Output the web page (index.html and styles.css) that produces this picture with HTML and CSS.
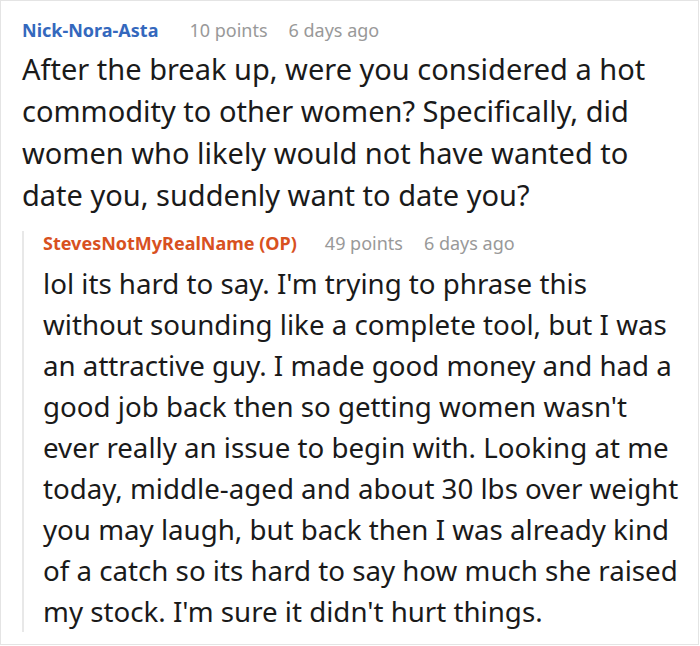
FILE: index.html
```html
<!DOCTYPE html>
<html lang="en">
<head>
<meta charset="utf-8">
<title>Comment thread</title>
<link rel="stylesheet" href="styles.css">
</head>
<body>
<div class="frame">
  <div class="comment">
    <div class="meta">
      <span class="user user-blue">Nick-Nora-Asta</span>
      <span class="info">10 points</span>
      <span class="info">6 days ago</span>
    </div>
    <p class="body">After the break up, were you considered a hot commodity to other women? Specifically, did women who likely would not have wanted to date you, suddenly want to date you?</p>
    <div class="reply">
      <div class="meta meta-reply">
        <span class="user user-op">StevesNotMyRealName (OP)</span>
        <span class="info">49 points</span>
        <span class="info">6 days ago</span>
      </div>
      <p class="body body-reply">lol its hard to say. I'm trying to phrase this<br>
without sounding like a complete tool, but I was<br>
an attractive guy. I made good money and had a<br>
good job back then so getting women wasn't<br>
ever really an issue to begin with. Looking at me<br>
today, middle-aged and about 30 lbs over weight<br>
you may laugh, but back then I was already kind<br>
of a catch so its hard to say how much she raised<br>
my stock. I'm sure it didn't hurt things.</p>
    </div>
  </div>
</div>
</body>
</html>
```
FILE: styles.css
```css
html, body {
  margin: 0;
  padding: 0;
  background: #ffffff;
}
.frame {
  box-sizing: border-box;
  width: 699px;
  height: 645px;
  border: 1px solid #e4e4e4;
  background: #ffffff;
  font-family: "Noto Sans", "Open Sans", sans-serif;
  color: #1a1a1a;
  overflow: hidden;
}
.comment {
  padding: 17px 0 0 21px;
}
.meta {
  display: flex;
  align-items: baseline;
  font-size: 18px;
  line-height: 24px;
  white-space: nowrap;
}
.user {
  font-weight: 700;
  margin-right: 31px;
}
.user-blue { color: #3468bd; }
.user-op { color: #d8511f; margin-right: 28px; }
.info {
  color: #999999;
  margin-right: 21px;
}
.body {
  margin: 6px 0 0 0;
  font-size: 29px;
  line-height: 42px;
  width: 655px;
}
.reply {
  margin-top: 24px;
  border-left: 2px solid #e8e8e8;
  padding-left: 19px;
}
.meta-reply {
  margin-top: -9px;
}
.body-reply {
  margin-top: 8px;
  font-size: 27.7px;
  line-height: 41px;
  white-space: nowrap;
  width: auto;
}
```
